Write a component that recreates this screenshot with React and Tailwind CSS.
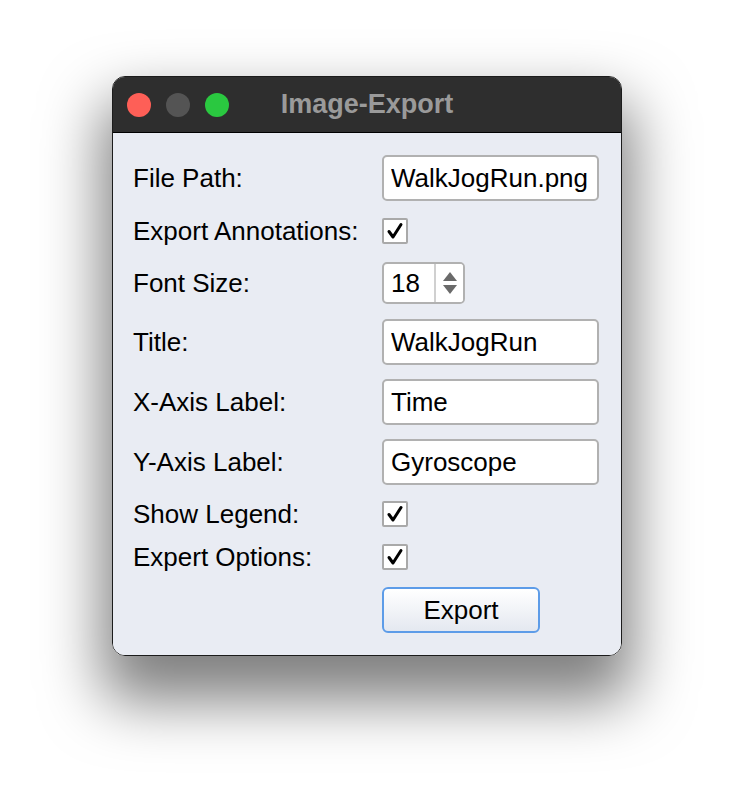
import { useState } from 'react';

const FONT = { fontFamily: '"Liberation Sans", Arial, sans-serif' };

function Check({ checked, onToggle }) {
  return (
    <button onClick={onToggle}
      className="w-[26px] h-[26px] bg-white border-2 border-[#a9a9a9] rounded-[2px] flex items-center justify-center p-0">
      {checked && (
        <svg width="18" height="18" viewBox="0 0 18 18">
          <path d="M3 9.5 L7 15 L15 2.5" fill="none" stroke="#000" strokeWidth="3" strokeLinecap="round" strokeLinejoin="round" />
        </svg>
      )}
    </button>
  );
}

function TextBox({ value, onChange }) {
  return (
    <input value={value} onChange={e => onChange(e.target.value)}
      className="w-[217px] h-[46px] bg-white border-2 border-[#b1b1b1] rounded-[5px] pl-[7px] text-[26px] text-black outline-none"
      style={FONT} />
  );
}

function Row({ label, children, className = '' }) {
  return (
    <div className={`flex items-center ${className}`}>
      <div className="w-[249px] text-[26px] text-black leading-none">{label}</div>
      {children}
    </div>
  );
}

export default function App() {
  const [path, setPath] = useState('WalkJogRun.png');
  const [annot, setAnnot] = useState(true);
  const [size, setSize] = useState(18);
  const [title, setTitle] = useState('WalkJogRun');
  const [xLabel, setXLabel] = useState('Time');
  const [yLabel, setYLabel] = useState('Gyroscope');
  const [legend, setLegend] = useState(true);
  const [expert, setExpert] = useState(true);

  return (
    <div className="min-h-screen bg-white flex justify-center pt-[76px]" style={FONT}>
      <div className="w-[510px] h-[580px] rounded-[13px] overflow-hidden flex flex-col border border-[#1c1c1c] shadow-[0_35px_60px_10px_rgba(0,0,0,0.5)]">
        {/* title bar */}
        <div className="relative h-[56px] bg-[#2e2e2e] border-b border-black flex items-center pl-[14px] gap-[15px] flex-shrink-0">
          <span className="w-[24px] h-[24px] rounded-full bg-[#fe5f57]" />
          <span className="w-[24px] h-[24px] rounded-full bg-[#545454]" />
          <span className="w-[24px] h-[24px] rounded-full bg-[#2ac840]" />
          <div className="absolute inset-0 flex items-center justify-center text-[27px] font-bold text-[#9a9a9a] pointer-events-none">
            Image-Export
          </div>
        </div>

        {/* form */}
        <div className="flex-1 bg-[#e9ecf3] pl-[20px] pt-[22px] flex flex-col">
          <Row label="File Path:">
            <TextBox value={path} onChange={setPath} />
          </Row>
          <Row label="Export Annotations:" className="mt-[17px]">
            <Check checked={annot} onToggle={() => setAnnot(!annot)} />
          </Row>
          <Row label="Font Size:" className="mt-[18px]">
            <div className="w-[83px] h-[42px] bg-white border-2 border-[#b1b1b1] rounded-[5px] flex overflow-hidden">
              <div className="w-[52px] border-r-2 border-[#d0d0d0] flex items-center pl-[7px] text-[26px] leading-none">{size}</div>
              <div className="flex-1 flex flex-col items-center justify-center gap-[4px] bg-white">
                <button onClick={() => setSize(size + 1)} className="p-0 leading-none">
                  <svg width="14" height="9" viewBox="0 0 14 9"><path d="M7 0 L14 9 L0 9 Z" fill="#6a6a6a" /></svg>
                </button>
                <button onClick={() => setSize(Math.max(1, size - 1))} className="p-0 leading-none">
                  <svg width="14" height="9" viewBox="0 0 14 9"><path d="M0 0 L14 0 L7 9 Z" fill="#6a6a6a" /></svg>
                </button>
              </div>
            </div>
          </Row>
          <Row label="Title:" className="mt-[15px]">
            <TextBox value={title} onChange={setTitle} />
          </Row>
          <Row label="X-Axis Label:" className="mt-[14px]">
            <TextBox value={xLabel} onChange={setXLabel} />
          </Row>
          <Row label="Y-Axis Label:" className="mt-[14px]">
            <TextBox value={yLabel} onChange={setYLabel} />
          </Row>
          <Row label="Show Legend:" className="mt-[16px]">
            <Check checked={legend} onToggle={() => setLegend(!legend)} />
          </Row>
          <Row label="Expert Options:" className="mt-[17px]">
            <Check checked={expert} onToggle={() => setExpert(!expert)} />
          </Row>
          <Row label="" className="mt-[17px]">
            <button className="w-[158px] h-[46px] rounded-[6px] border-2 border-[#5d9ce8] bg-gradient-to-b from-white to-[#e4e8f0] text-[26px] text-black">
              Export
            </button>
          </Row>
        </div>
      </div>
    </div>
  );
}
